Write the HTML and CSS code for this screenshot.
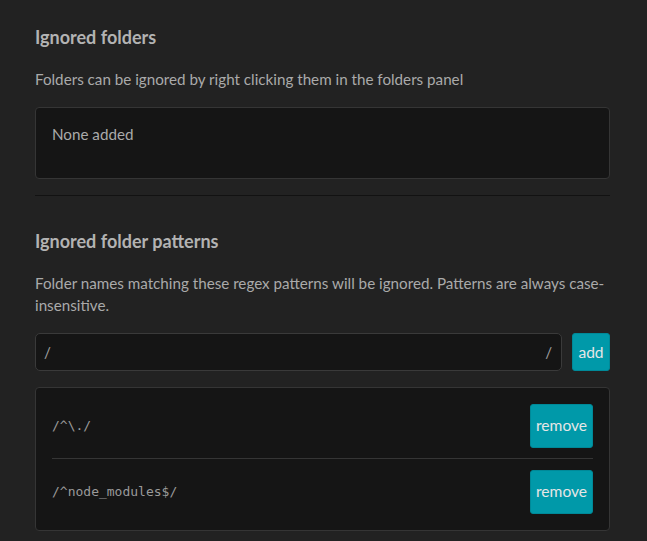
FILE: index.html
```
<!DOCTYPE html>
<html lang="en">
<head>
<meta charset="utf-8">
<title>Ignored folders</title>
<link rel="stylesheet" href="styles.css">
</head>
<body>
<main class="settings">
  <section class="section">
    <h3 class="title">Ignored folders</h3>
    <p class="desc">Folders can be ignored by right clicking them in the folders panel</p>
    <div class="panel panel-empty">None added</div>
  </section>
  <hr class="sep">
  <section class="section">
    <h3 class="title title-second">Ignored folder patterns</h3>
    <p class="desc">Folder names matching these regex patterns will be ignored. Patterns are always case-insensitive.</p>
    <div class="add-row">
      <div class="regex-input">
        <span class="slash">/</span>
        <input class="regex-field" type="text" value="">
        <span class="slash">/</span>
      </div>
      <button class="btn btn-add" type="button">add</button>
    </div>
    <ul class="panel pattern-list">
      <li class="pattern">
        <code class="pattern-text">/^\./</code>
        <button class="btn btn-remove" type="button">remove</button>
      </li>
      <li class="pattern">
        <code class="pattern-text">/^node_modules$/</code>
        <button class="btn btn-remove" type="button">remove</button>
      </li>
    </ul>
  </section>
</main>
</body>
</html>
```
FILE: styles.css
```
html, body {
  margin: 0;
  padding: 0;
  background: #222222;
}

body {
  font-family: "Source Sans Pro", Lato, "Noto Sans", sans-serif;
  font-size: 15.2px;
  color: #aaaaaa;
}

.settings {
  width: 575px;
  padding: 24px 0 0 35px;
}

.title {
  margin: 0;
  font-size: 18px;
  line-height: 26px;
  font-weight: bold;
  color: #b3b3b3;
}

.title-second {
  margin-top: 32px;
}

.desc {
  margin: 18px 0 16px;
  line-height: 22.5px;
}

.panel {
  box-sizing: border-box;
  background: #151515;
  border: 1px solid #353535;
  border-radius: 4px;
}

.panel-empty {
  height: 72px;
  padding: 14px 16px;
  line-height: 24px;
}

.sep {
  margin: 16px 0 0;
  border: 0;
  height: 1px;
  background: #121212;
}

.add-row {
  display: flex;
  gap: 10px;
  height: 38px;
}

.regex-input {
  flex: 1;
  display: flex;
  align-items: center;
  box-sizing: border-box;
  padding: 0 9px 0 8px;
  background: #151515;
  border: 1px solid #3a3a3a;
  border-radius: 5px;
}

.slash {
  color: #a0a0a0;
}

.regex-field {
  flex: 1;
  min-width: 0;
  background: transparent;
  border: 0;
  outline: none;
  font: inherit;
  color: #aaaaaa;
  padding: 0;
}

.btn {
  box-sizing: border-box;
  font-family: inherit;
  font-size: 15.6px;
  color: #e6e6e6;
  background: #0099a9;
  border: 1px solid #008998;
  border-radius: 3px;
  padding: 0 5px;
  cursor: pointer;
}

.btn-add {
  width: 38px;
  height: 38px;
  padding: 0;
}

.btn-remove {
  width: 63px;
  height: 44px;
  padding-bottom: 2px;
}

.pattern-list {
  list-style: none;
  margin: 16px 0 0;
  padding: 16px 16px;
}

.pattern {
  display: flex;
  align-items: center;
  justify-content: space-between;
}

.pattern:first-child {
  padding-bottom: 10px;
  border-bottom: 1px solid #353535;
}

.pattern + .pattern {
  padding-top: 11px;
}

.pattern-text {
  font-family: "DejaVu Sans Mono", "Liberation Mono", monospace;
  font-size: 13px;
  color: #9a9a9a;
}
```
